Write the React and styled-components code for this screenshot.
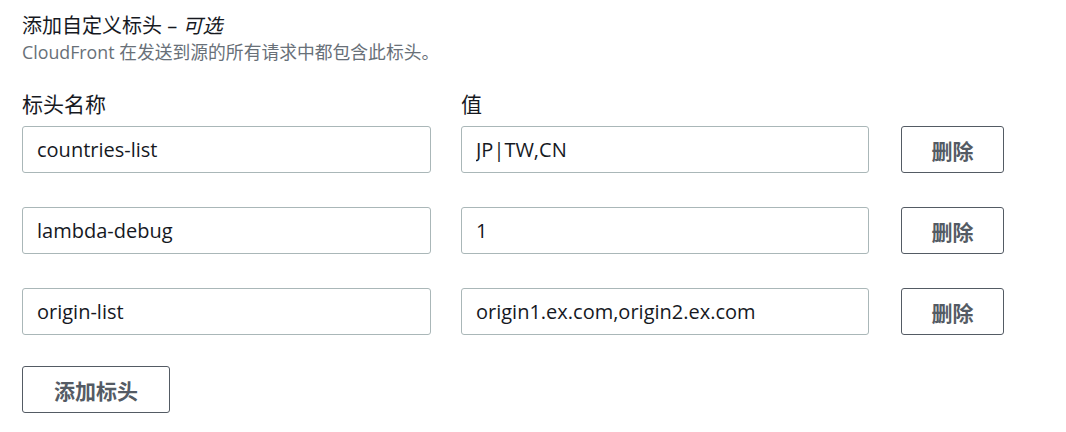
import React from "react";
import styled, { createGlobalStyle } from "styled-components";

const FONT = `"Open Sans", "Noto Sans CJK SC", sans-serif`;

const Global = createGlobalStyle`
  html, body { margin: 0; padding: 0; background: #ffffff; }
  body { font-family: ${FONT}; color: #16191f; }
  * { box-sizing: border-box; }
`;

const Page = styled.div`
  padding: 12px 0 0 22px;
  width: 1066px;
  height: 432px;
`;

const Title = styled.h2`
  margin: 0;
  font-size: 20px;
  line-height: 27px;
  font-weight: 400;
  color: #16191f;
  em { font-style: italic; }
`;

const Description = styled.p`
  margin: 0;
  font-size: 17.8px;
  line-height: 26px;
  color: #687078;
`;

const Columns = styled.div`
  display: grid;
  grid-template-columns: 409px 408px 103px;
  column-gap: 30px;
  align-items: center;
`;

const LabelRow = styled(Columns)`
  margin-top: 25px;
`;

const Label = styled.div`
  font-size: 21px;
  line-height: 28px;
  color: #16191f;
`;

const Rows = styled.div`
  margin-top: 8px;
  display: flex;
  flex-direction: column;
  gap: 34px;
`;

const Input = styled.input`
  width: 100%;
  height: 47px;
  padding: 0 14px;
  border: 1px solid #aab7b8;
  border-radius: 3px;
  font-family: ${FONT};
  font-size: 20px;
  color: #16191f;
  background: #fff;
  outline: none;
`;

const Button = styled.button`
  height: 47px;
  width: ${(p) => p.$width || "103px"};
  margin-left: ${(p) => p.$offset || "0"};
  padding: 0;
  border: 1px solid #545b64;
  border-radius: 3px;
  background: #fff;
  color: #545b64;
  font-family: ${FONT};
  font-size: 21px;
  font-weight: 700;
  cursor: pointer;
`;

const Footer = styled.div`
  margin-top: 31px;
`;

const rows = [
  { name: "countries-list", value: "JP|TW,CN" },
  { name: "lambda-debug", value: "1" },
  { name: "origin-list", value: "origin1.ex.com,origin2.ex.com" },
];

export default function App() {
  return (
    <>
      <Global />
      <Page>
        <Title>
          添加自定义标头 – <em>可选</em>
        </Title>
        <Description>CloudFront 在发送到源的所有请求中都包含此标头。</Description>
        <LabelRow>
          <Label>标头名称</Label>
          <Label>值</Label>
        </LabelRow>
        <Rows>
          {rows.map((r) => (
            <Columns key={r.name}>
              <Input defaultValue={r.name} />
              <Input defaultValue={r.value} />
              <Button $offset="2px">删除</Button>
            </Columns>
          ))}
        </Rows>
        <Footer>
          <Button $width="148px">添加标头</Button>
        </Footer>
      </Page>
    </>
  );
}
